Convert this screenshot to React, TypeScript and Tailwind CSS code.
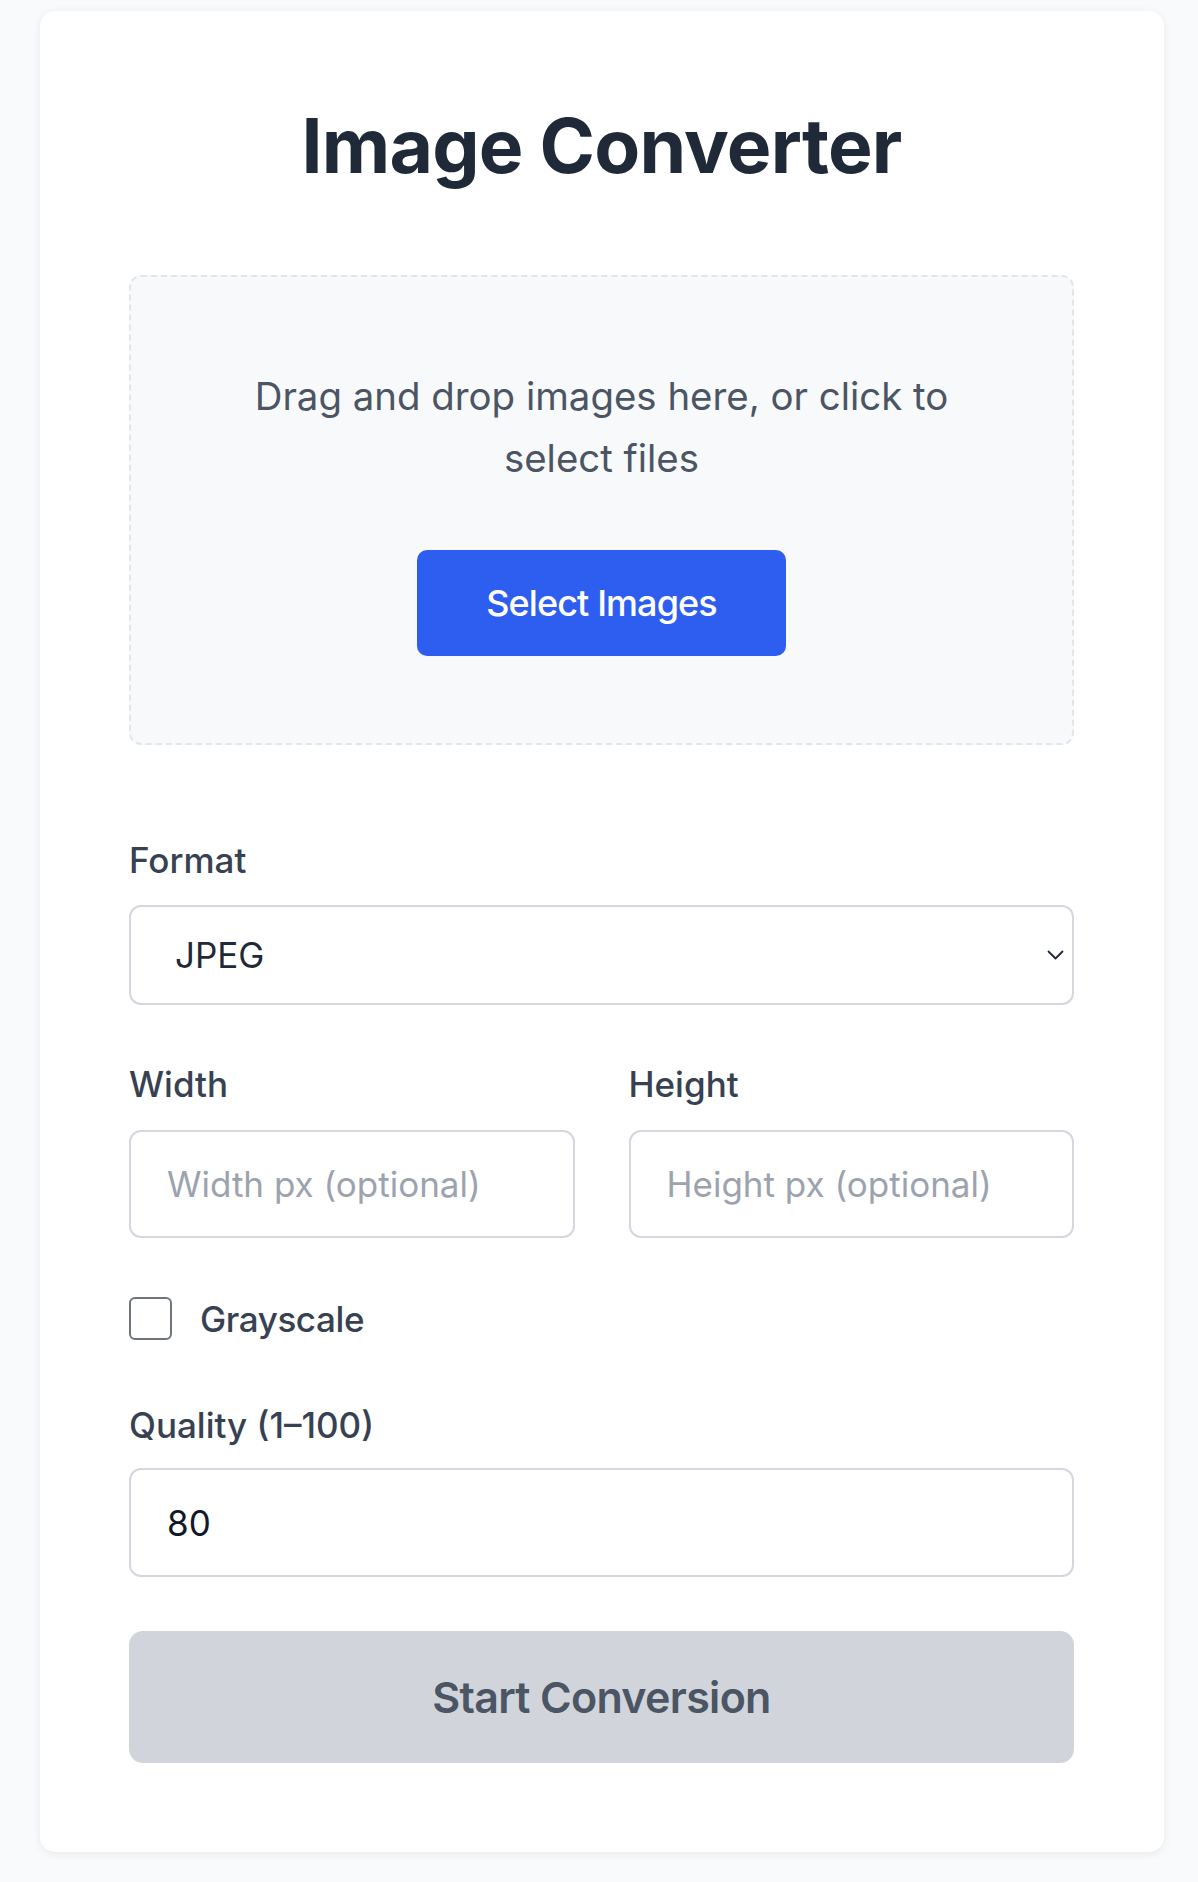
import React from "react";

export default function App() {
  return (
    <div
      className="min-h-screen bg-[#f9fafb] pl-[40px] pt-[11px] pb-[31px]"
      style={{ fontFamily: "Inter, 'Noto Sans', sans-serif" }}
    >
      <div className="flex w-[1124px] flex-col rounded-[15px] bg-white pb-[89px] pl-[89px] pr-[90px] pt-[89px] shadow-[0_2px_10px_rgba(0,0,0,0.07)]">
        <h1 className="mb-[83px] text-center text-[75px] font-bold leading-[92px] tracking-[-0.8px] text-[#1f2937]">
          Image Converter
        </h1>

        <div className="flex flex-col items-center rounded-[12px] border-2 border-dashed border-[#e2e5ea] bg-[#f8f9fb] px-[88px] pb-[87px] pt-[88px]">
          <p className="text-center text-[38.4px] leading-[62px] text-[#4b5563]">
            Drag and drop images here, or click to select files
          </p>
          <button className="mt-[61px] flex h-[106px] w-[369px] items-center justify-center rounded-[10px] bg-[#2e5ef0] text-[36px] font-medium tracking-[-0.9px] text-white">
            Select Images
          </button>
        </div>

        <label className="mt-[89px] mb-[19px] text-[35px] font-medium leading-[52px] text-[#374151]">
          Format
        </label>
        <div className="relative">
          <select
            defaultValue="JPEG"
            className="h-[100px] w-full appearance-none rounded-[12px] border-2 border-[#d4d7dd] bg-white pl-[44px] text-[35px] text-[#1f2937] outline-none"
          >
            <option>JPEG</option>
            <option>PNG</option>
            <option>WEBP</option>
          </select>
          <svg
            className="pointer-events-none absolute right-[10px] top-[45px]"
            width="17"
            height="10"
            viewBox="0 0 17 10"
            fill="none"
          >
            <path d="M1.5 1.5 L8.5 8.5 L15.5 1.5" stroke="#1f2937" strokeWidth="1.8" strokeLinecap="round" strokeLinejoin="round" />
          </svg>
        </div>

        <div className="mt-[53px] grid grid-cols-2 gap-x-[54px]">
          <div className="flex flex-col">
            <label className="mb-[20px] text-[35px] font-medium leading-[52px] text-[#374151]">
              Width
            </label>
            <input
              placeholder="Width px (optional)"
              className="h-[108px] w-full rounded-[12px] border-2 border-[#d4d7dd] bg-white pl-[36px] text-[35px] text-[#111827] outline-none placeholder:text-[#9ca3af]"
            />
          </div>
          <div className="flex flex-col">
            <label className="mb-[20px] text-[35px] font-medium leading-[52px] text-[#374151]">
              Height
            </label>
            <input
              placeholder="Height px (optional)"
              className="h-[108px] w-full rounded-[12px] border-2 border-[#d4d7dd] bg-white pl-[36px] text-[35px] text-[#111827] outline-none placeholder:text-[#9ca3af]"
            />
          </div>
        </div>

        <div className="mt-[54.5px] flex items-center gap-[28px]">
          <span className="block h-[43px] w-[43px] rounded-[6px] border-2 border-[#70757d] bg-white" />
          <span className="text-[35px] font-medium leading-[52px] tracking-[-0.4px] text-[#374151]">Grayscale</span>
        </div>

        <label className="mt-[54.5px] mb-[17px] text-[35px] font-medium leading-[52px] text-[#374151]">
          Quality (1–100)
        </label>
        <input
          defaultValue="80"
          className="h-[109px] w-full rounded-[12px] border-2 border-[#d4d7dd] bg-white pl-[36px] text-[35px] text-[#111827] outline-none"
        />

        <button className="mt-[54px] flex h-[132px] w-full items-center justify-center rounded-[14px] bg-[#d1d5db] text-[43px] font-semibold tracking-[-0.7px] text-[#4b5563]">
          Start Conversion
        </button>
      </div>
    </div>
  );
}
